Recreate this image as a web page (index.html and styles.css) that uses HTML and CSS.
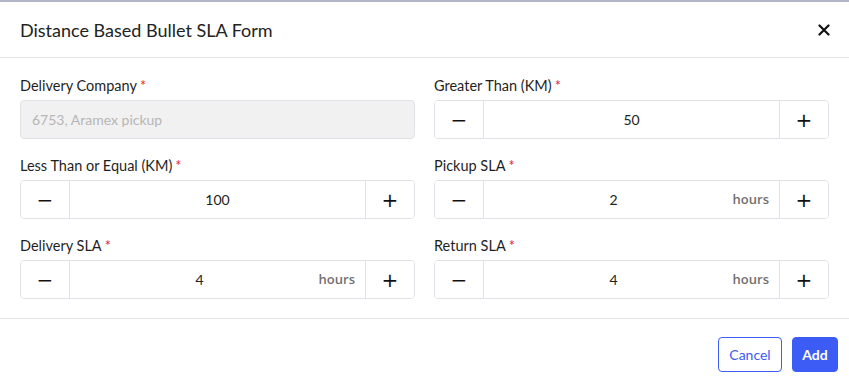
FILE: index.html
```html
<!DOCTYPE html>
<html lang="en">

<head>
    <meta charset="UTF-8">
    <meta name="viewport" content="width=device-width, initial-scale=1.0">
    <title>Distance Based Bullet SLA Form</title>
    <link rel="stylesheet" href="styles.css">
</head>

<body>
    <div class="modal">
        <div class="modal-header">
            <h1>Distance Based Bullet SLA Form</h1>
            <button type="button" class="close">
                <svg width="12" height="12" viewBox="0 0 12 12"><path d="M1.5 1.5 L10.5 10.5 M10.5 1.5 L1.5 10.5" stroke="#111" stroke-width="2.2" stroke-linecap="round"/></svg>
            </button>
        </div>
        <form class="modal-body">
            <div class="field">
                <label>Delivery Company<span class="req">*</span></label>
                <input type="text" class="text-input" value="" placeholder="6753, Aramex pickup" disabled>
            </div>
            <div class="field">
                <label>Greater Than (KM)<span class="req">*</span></label>
                <div class="stepper">
                    <button type="button" class="step">&minus;</button>
                    <div class="step-value"><input type="text" value="50"></div>
                    <button type="button" class="step">+</button>
                </div>
            </div>
            <div class="field">
                <label>Less Than or Equal (KM)<span class="req">*</span></label>
                <div class="stepper">
                    <button type="button" class="step">&minus;</button>
                    <div class="step-value"><input type="text" value="100"></div>
                    <button type="button" class="step">+</button>
                </div>
            </div>
            <div class="field">
                <label>Pickup SLA<span class="req">*</span></label>
                <div class="stepper">
                    <button type="button" class="step">&minus;</button>
                    <div class="step-value with-suffix"><input type="text" value="2"><span class="suffix">hours</span></div>
                    <button type="button" class="step">+</button>
                </div>
            </div>
            <div class="field">
                <label>Delivery SLA<span class="req">*</span></label>
                <div class="stepper">
                    <button type="button" class="step">&minus;</button>
                    <div class="step-value with-suffix"><input type="text" value="4"><span class="suffix">hours</span></div>
                    <button type="button" class="step">+</button>
                </div>
            </div>
            <div class="field">
                <label>Return SLA<span class="req">*</span></label>
                <div class="stepper">
                    <button type="button" class="step">&minus;</button>
                    <div class="step-value with-suffix"><input type="text" value="4"><span class="suffix">hours</span></div>
                    <button type="button" class="step">+</button>
                </div>
            </div>
        </form>
        <div class="modal-footer">
            <button type="button" class="btn btn-outline">Cancel</button>
            <button type="button" class="btn btn-primary">Add</button>
        </div>
    </div>
</body>

</html>
```

FILE: styles.css
```css
* {
    margin: 0;
    padding: 0;
    box-sizing: border-box;
}

body {
    font-family: Lato, "Noto Sans", sans-serif;
    background-color: #fff;
    color: #1f1f1f;
}

.modal {
    border-top: 2px solid #b1b4c4;
    background: #fff;
}

.modal-header {
    height: 56px;
    display: flex;
    align-items: center;
    justify-content: space-between;
    padding: 0 17px 0 20px;
    border-bottom: 1px solid #e3e3e3;
}

.modal-header h1 {
    font-size: 18px;
    font-weight: 400;
    color: #222;
}

.close {
    background: none;
    border: none;
    width: 16px;
    height: 16px;
    display: flex;
    align-items: center;
    justify-content: center;
    cursor: pointer;
}

/* Two column form grid */
.modal-body {
    display: grid;
    grid-template-columns: 1fr 1fr;
    column-gap: 19px;
    row-gap: 17px;
    padding: 18px 20px 19px;
    border-bottom: 1px solid #e3e3e3;
}

.field label {
    display: block;
    font-size: 14.5px;
    line-height: 20px;
    color: #1f1f1f;
    margin-bottom: 4px;
}

.req {
    color: #e8262b;
    margin-left: 3px;
}

.text-input {
    width: 100%;
    height: 39px;
    border: 1px solid #dfe3e8;
    border-radius: 4px;
    background: #f1f1f1;
    padding: 0 11px;
    font-family: inherit;
    font-size: 14px;
}

.text-input::placeholder {
    color: #b6b6b6;
}

.stepper {
    display: flex;
    height: 39px;
    border: 1px solid #dfe3e8;
    border-radius: 4px;
    overflow: hidden;
}

.step {
    width: 48px;
    flex: none;
    background: #fff;
    border: none;
    font-family: "DejaVu Sans", sans-serif;
    font-size: 20px;
    color: #111;
    cursor: pointer;
}

.step-value {
    flex: 1;
    position: relative;
    border-left: 1px solid #dfe3e8;
    border-right: 1px solid #dfe3e8;
}

.step-value input {
    width: 100%;
    height: 100%;
    border: none;
    text-align: center;
    font-family: inherit;
    font-size: 14px;
    color: #222;
    background: transparent;
}

.with-suffix input {
    padding-right: 36px;
}

.suffix {
    position: absolute;
    right: 10px;
    top: 0;
    line-height: 37px;
    font-family: "Open Sans", sans-serif;
    font-weight: 600;
    font-size: 13px;
    color: #707070;
}

.modal-footer {
    display: flex;
    justify-content: flex-end;
    gap: 10px;
    padding: 18px 11px 0 0;
}

.btn {
    height: 35px;
    border-radius: 4px;
    font-family: inherit;
    font-size: 14px;
    cursor: pointer;
}

.btn-outline {
    width: 64px;
    background: #fff;
    border: 1px solid #3d5cf5;
    color: #3d5cf5;
}

.btn-primary {
    width: 46px;
    background: #3d5cf5;
    border: 1px solid #3d5cf5;
    color: #fff;
    font-weight: 700;
}
```
